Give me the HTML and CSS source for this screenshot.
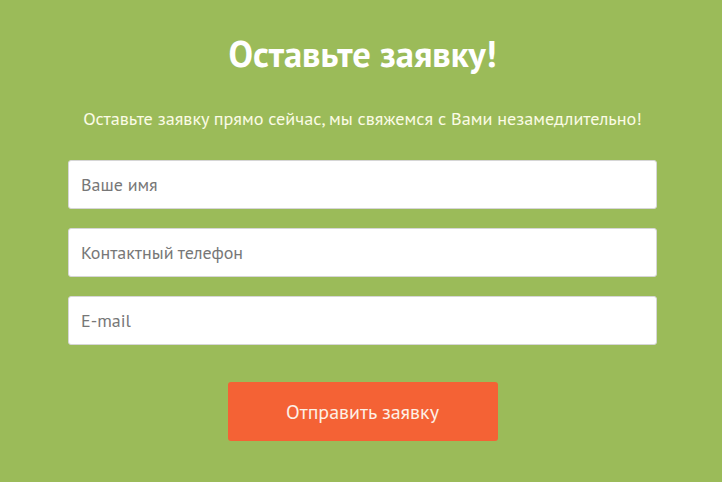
FILE: index.html
```html
<!DOCTYPE html>
<html lang="ru">
<head>
<meta charset="utf-8">
<title>Оставьте заявку</title>
<link rel="stylesheet" href="styles.css">
</head>
<body>
<section class="request">
  <h1 class="request__title">Оставьте заявку!</h1>
  <p class="request__text">Оставьте заявку прямо сейчас, мы свяжемся с Вами незамедлительно!</p>
  <form class="request__form">
    <input class="request__input" type="text" placeholder="Ваше имя">
    <input class="request__input" type="tel" placeholder="Контактный телефон">
    <input class="request__input" type="email" placeholder="E-mail">
    <button class="request__button" type="button">Отправить заявку</button>
  </form>
</section>
</body>
</html>
```

FILE: styles.css
```css
html, body {
  margin: 0;
  padding: 0;
}
body {
  background: #9bbb59;
  font-family: "PT Sans", Roboto, "Liberation Sans", sans-serif;
  width: 722px;
  height: 482px;
  overflow: hidden;
}
.request {
  display: flex;
  flex-direction: column;
  align-items: center;
  padding: 32px 0 0 3px;
}
.request__title {
  margin: 0;
  color: #ffffff;
  font-size: 36.6px;
  font-weight: 700;
  line-height: 44px;
}
.request__text {
  margin: 31px 0 0;
  color: #fbfbe6;
  font-size: 18.2px;
  line-height: 22px;
}
.request__form {
  margin-top: 31px;
  width: 589px;
  display: flex;
  flex-direction: column;
  align-items: center;
  gap: 19px;
}
.request__input {
  box-sizing: border-box;
  width: 100%;
  height: 49px;
  margin: 0;
  padding: 0 12px;
  border: 1px solid #d6d6d6;
  border-radius: 3px;
  background: #ffffff;
  font-family: inherit;
  font-size: 18px;
  color: #333;
  outline: none;
}
.request__input::placeholder {
  color: #777777;
  opacity: 1;
}
.request__button {
  margin-top: 18px;
  width: 270px;
  height: 59px;
  border: none;
  border-radius: 3px;
  background: #f46235;
  color: #fdf0e6;
  font-family: inherit;
  font-size: 20px;
  cursor: pointer;
}
```
